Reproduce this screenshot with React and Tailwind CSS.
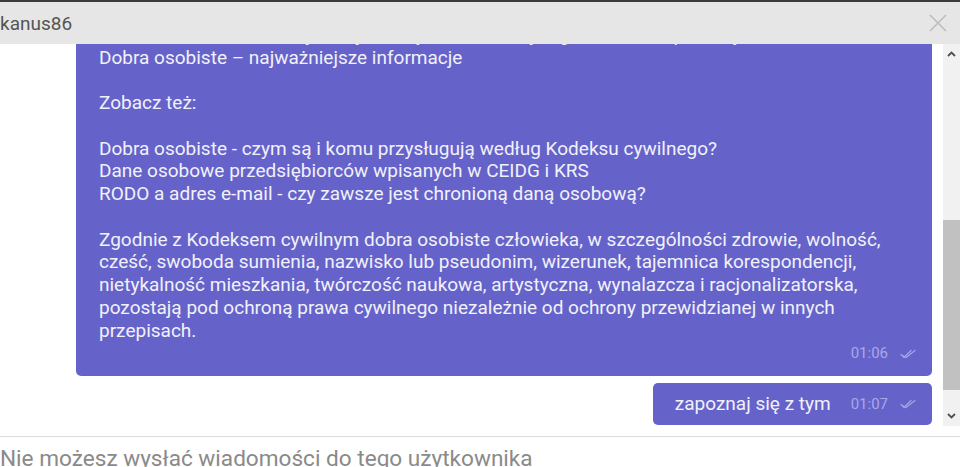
import React from 'react';

const mainLines = [
  'Naruszenie dóbr osobistych – jakie są konsekwencje i gdzie szukać pomocy?',
  'Dobra osobiste – najważniejsze informacje',
  '',
  'Zobacz też:',
  '',
  'Dobra osobiste - czym są i komu przysługują według Kodeksu cywilnego?',
  'Dane osobowe przedsiębiorców wpisanych w CEIDG i KRS',
  'RODO a adres e-mail - czy zawsze jest chronioną daną osobową?',
  '',
  'Zgodnie z Kodeksem cywilnym dobra osobiste człowieka, w szczególności zdrowie, wolność,',
  'cześć, swoboda sumienia, nazwisko lub pseudonim, wizerunek, tajemnica korespondencji,',
  'nietykalność mieszkania, twórczość naukowa, artystyczna, wynalazcza i racjonalizatorska,',
  'pozostają pod ochroną prawa cywilnego niezależnie od ochrony przewidzianej w innych',
  'przepisach.',
];

function Ticks() {
  return (
    <svg width="17" height="10" viewBox="0 0 17 10" fill="none" stroke="#a7a6e4" strokeWidth="1.2" strokeLinecap="round">
      <path d="M1 5.5l3 3L11 1.5" />
      <path d="M6 8.5L15 1.5" />
      <path d="M3.5 7l1.5 1.5" />
    </svg>
  );
}

function Meta({ time }) {
  return (
    <div className="flex items-center gap-[12px] text-[15px] text-[#a9a8e6] leading-none">
      <span>{time}</span>
      <Ticks />
    </div>
  );
}

export default function App() {
  return (
    <div className="w-[960px] h-[467px] overflow-hidden bg-white flex flex-col font-['Roboto',sans-serif] border-t-2 border-[#3c3c3c]">
      <div className="h-[42px] shrink-0 bg-[#e6e6e6] flex items-center justify-between pr-[12px]">
        <span className="text-[19px] text-[#555] leading-none">kanus86</span>
        <svg width="20" height="20" viewBox="0 0 20 20" stroke="#bdbdbd" strokeWidth="1.6">
          <path d="M2 2l16 16M18 2L2 18" />
        </svg>
      </div>

      <div className="h-[382px] shrink-0 flex">
        <div className="flex-1 overflow-hidden flex flex-col justify-end items-end gap-[7px] pl-[76px] pr-[11px] pb-[1px]">
          <div className="w-full shrink-0 bg-[#6563c9] rounded-b-[5px] pl-[23px] pr-[15px] pt-[12px] pb-[11px] text-[#f1f1fa] text-[19px] leading-[22.75px]">
            {mainLines.map((l, i) => (
              <div key={i} className="whitespace-nowrap h-[22.75px]">{l}</div>
            ))}
            <div className="h-[22.75px] flex items-center justify-end">
              <Meta time="01:06" />
            </div>
          </div>
          <div className="shrink-0 h-[42px] bg-[#6563c9] rounded-[5px] pl-[22px] pr-[15px] flex items-center gap-[20px] text-[#f1f1fa] text-[19px]">
            <span>zapoznaj się z tym</span>
            <Meta time="01:07" />
          </div>
        </div>

        <div className="w-[17px] shrink-0 bg-[#f1f1f1] flex flex-col">
          <div className="h-[17px] flex items-center justify-center pt-[2px]">
            <svg width="9" height="6" viewBox="0 0 9 6" fill="none" stroke="#505050" strokeWidth="1.8">
              <path d="M1 5l3.5-3.5L8 5" />
            </svg>
          </div>
          <div className="flex-1 flex flex-col">
            <div className="h-[159px]" />
            <div className="h-[170px] bg-[#c1c1c1]" />
          </div>
          <div className="h-[20px] flex items-center justify-center">
            <svg width="9" height="6" viewBox="0 0 9 6" fill="none" stroke="#505050" strokeWidth="1.8">
              <path d="M1 1l3.5 3.5L8 1" />
            </svg>
          </div>
        </div>
      </div>

      <div className="mt-[10px] border-t border-[#dcdcdc] pt-[8px]">
        <span className="text-[22.6px] text-[#8a8a8a] leading-[28px] whitespace-nowrap">Nie możesz wysłać wiadomości do tego użytkownika</span>
      </div>
    </div>
  );
}
